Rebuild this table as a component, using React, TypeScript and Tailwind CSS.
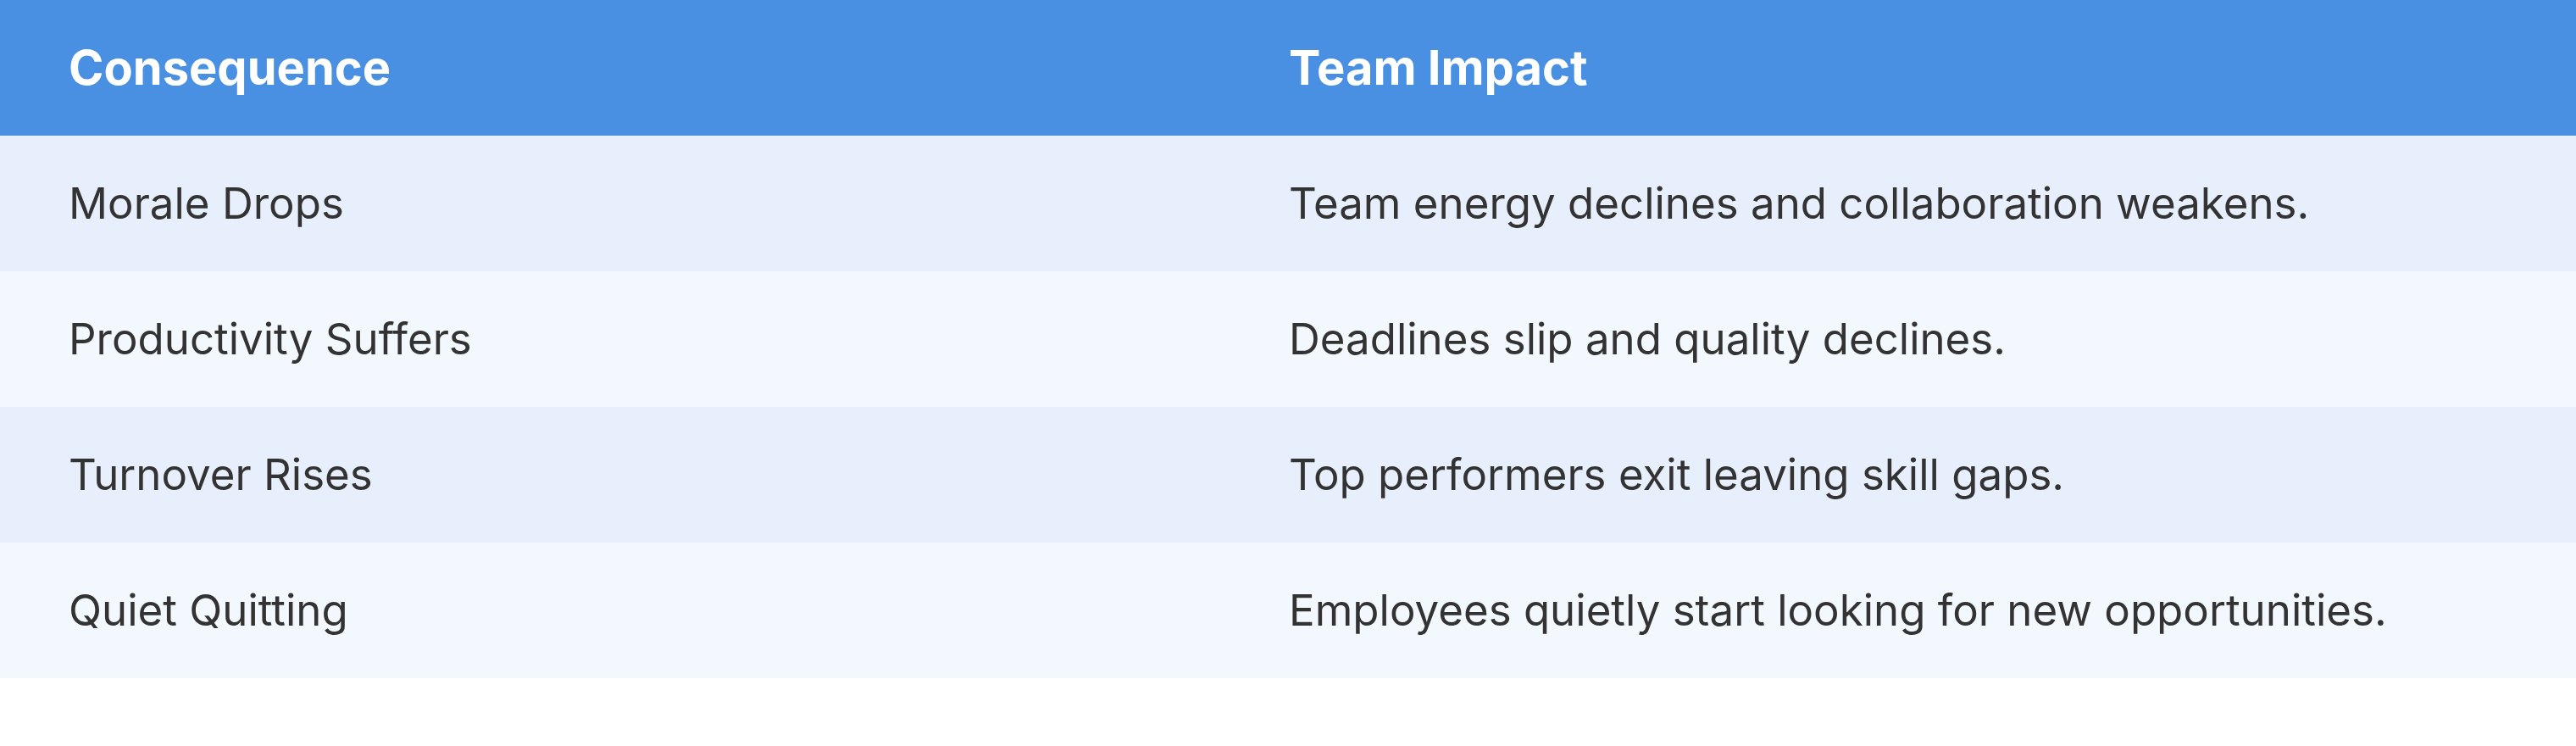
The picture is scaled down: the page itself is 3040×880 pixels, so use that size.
const rows = [
  { consequence: 'Morale Drops', impact: 'Team energy declines and collaboration weakens.' },
  { consequence: 'Productivity Suffers', impact: 'Deadlines slip and quality declines.' },
  { consequence: 'Turnover Rises', impact: 'Top performers exit leaving skill gaps.' },
  { consequence: 'Quiet Quitting', impact: 'Employees quietly start looking for new opportunities.' },
]

export default function App() {
  return (
    <div className="w-[3040px] h-[880px] bg-white font-['Inter',sans-serif]">
      <div className="grid grid-cols-[1440px_1fr] h-[160px] items-center bg-[#4a90e2] text-white font-bold text-[56px]">
        <div className="px-[81px]">Consequence</div>
        <div className="px-[81px]">Team Impact</div>
      </div>
      {rows.map((row, i) => (
        <div
          key={row.consequence}
          className={`grid grid-cols-[1440px_1fr] h-[160px] items-center text-[51px] text-[#333333] ${
            i % 2 === 0 ? 'bg-[#e8effc]' : 'bg-[#f3f7fe]'
          }`}
        >
          <div className="px-[81px]">{row.consequence}</div>
          <div className="px-[81px]">{row.impact}</div>
        </div>
      ))}
    </div>
  )
}
